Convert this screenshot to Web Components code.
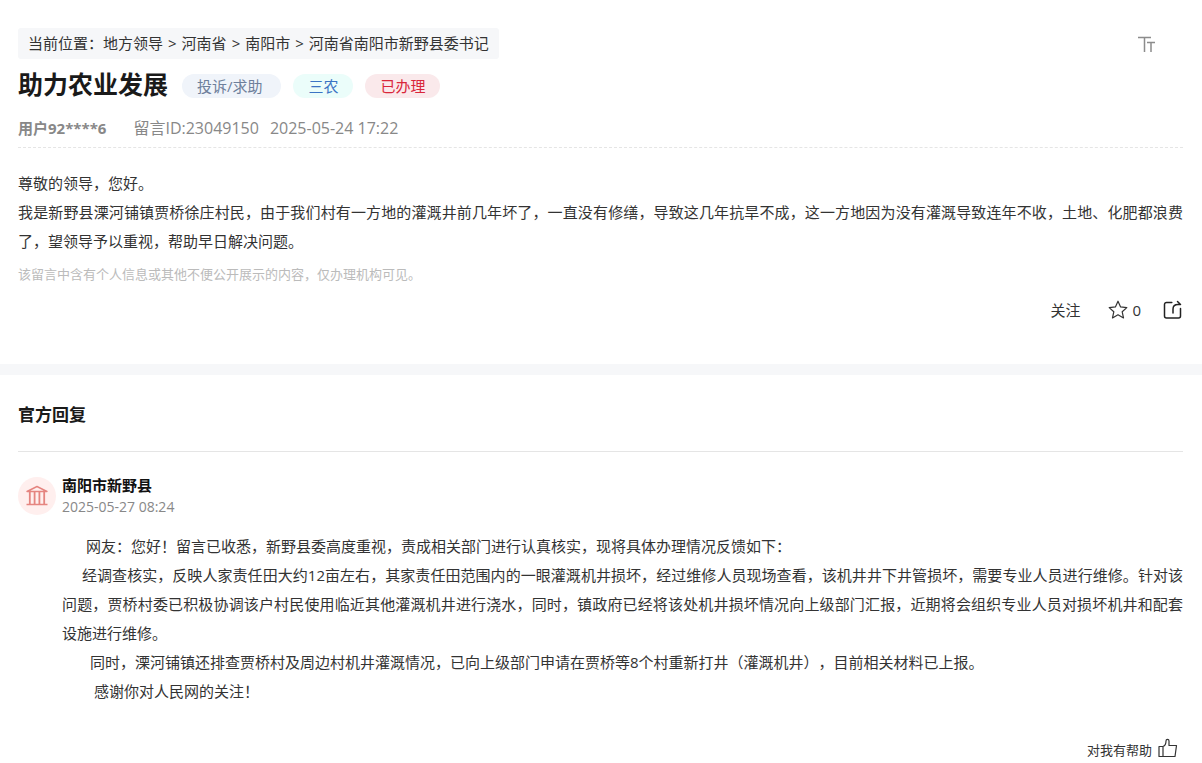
<!DOCTYPE html>
<html lang="zh-CN">
<head>
<meta charset="utf-8">
<meta name="viewport" content="width=device-width, initial-scale=1">
<title>助力农业发展</title>
<style>
body {
  margin: 0;
  background: #fff;
  color: #333;
  font: 15px/24px "Open Sans", "Noto Sans CJK SC", sans-serif;
  text-spacing-trim: space-all;
}
</style>
</head>
<body>
<message-page></message-page>

<script>
function define(name, html) {
  const template = document.createElement('template');
  template.innerHTML = html;
  customElements.define(name, class extends HTMLElement {
    constructor() {
      super();
      this.attachShadow({ mode: 'open' }).append(template.content.cloneNode(true));
    }
  });
}

define('crumb-trail', `
<style>
:host { display: block; padding: 0 10px; border-radius: 3px; background: #f6f7f9; line-height: 31px; }
a { color: inherit; text-decoration: none; }
i { font-style: normal; margin: 0 5px; }
</style>
<nav aria-label="当前位置">当前位置：<a href="#leaders">地方领导</a><i>&gt;</i><a href="#henan">河南省</a><i>&gt;</i><a href="#nanyang">南阳市</a><i>&gt;</i><a href="#xinye">河南省南阳市新野县委书记</a></nav>
`);

define('font-size-button', `
<style>
:host { display: block; }
button { display: block; border: 0; padding: 0; background: none; color: #8c8c8c; cursor: pointer; }
svg { display: block; }
</style>
<button type="button" aria-label="字号"><svg width="20" height="18" viewBox="0 0 20 18" fill="none" stroke="currentColor" stroke-width="1.5"><path d="M1 2.500h13M7.500 2.500V17M10 7.500h8M14 7.500V17"/></svg></button>
`);

define('pill-tag', `
<style>
:host { display: block; padding: 0 15px; border-radius: 12px; background: #f0f4fa; color: #6e7f9b; line-height: 24px; }
:host([kind="topic"]) { background: #ebfdfa; color: #3b74c4; }
:host([kind="done"]) { background: #fae9eb; color: #d9263a; }
slot { white-space: pre; }
::slotted(*) { white-space: pre; }
</style>
<slot></slot>
`);

define('message-actions', `
<style>
:host { display: flex; justify-content: flex-end; align-items: center; }
button { display: flex; align-items: center; gap: 4px; height: 24px; border: 0; padding: 0; background: none; font: inherit; color: inherit; cursor: pointer; }
.star { margin: 0 22px 0 28px; }
svg { display: block; }
</style>
<button type="button">关注</button>
<button type="button" class="star"><svg width="20" height="20" viewBox="0 0 20 20" fill="none" stroke="currentColor" stroke-width="1.2" stroke-linejoin="round"><path d="M10 1.200l2.600 5.700 6.200.7-4.600 4.200 1.300 6.100L10 14.800l-5.500 3.100 1.300-6.100L1.200 7.600l6.200-.7z"/></svg>0</button>
<button type="button" aria-label="分享"><svg width="20" height="20" viewBox="0 0 20 20" fill="none" stroke="#222" stroke-width="1.5" stroke-linejoin="round" stroke-linecap="round"><path d="M8.800 2.500H3.500a2 2 0 0 0-2 2V16a2 2 0 0 0 2 2h12a2 2 0 0 0 2-2V8.500M10 13V9c0-3 2-4.500 5-4.500h2.500M14.500 1.500l3 3"/></svg></button>
`);

define('message-detail', `
<style>
:host { display: block; padding: 28px 19px 42px 18px; }
.top { display: flex; justify-content: space-between; align-items: center; padding-right: 26px; }
.title { display: flex; align-items: center; gap: 12px; height: 38px; margin-top: 8px; }
h1 { margin: 0 2px 0 0; padding-bottom: 4px; font-size: 25px; line-height: 34px; color: #1a1a1a; }
.meta { display: flex; gap: 11px; margin-top: 4px; border-bottom: 1px dashed #e5e5e5; line-height: 38px; font-size: 16px; color: #888; }
.meta strong { font-size: 15px; margin-right: 16px; }
p { margin: 0; line-height: 29px; text-align: justify; }
.meta + p { margin-top: 21px; }
.note { margin-top: 4px; font-size: 13px; color: #bbb; }
message-actions { margin-top: 9px; }
</style>
<div class="top"><crumb-trail></crumb-trail><font-size-button></font-size-button></div>
<div class="title"><h1>助力农业发展</h1><pill-tag>投诉/求助 </pill-tag><pill-tag kind="topic">三农</pill-tag><pill-tag kind="done">已办理</pill-tag></div>
<div class="meta"><strong>用户92****6</strong><span>留言ID:23049150</span><time>2025-05-24 17:22</time></div>
<p>尊敬的领导，您好。</p>
<p>我是新野县溧河铺镇贾桥徐庄村民，由于我们村有一方地的灌溉井前几年坏了，一直没有修缮，导致这几年抗旱不成，这一方地因为没有灌溉导致连年不收，土地、化肥都浪费了，望领导予以重视，帮助早日解决问题。</p>
<p class="note">该留言中含有个人信息或其他不便公开展示的内容，仅办理机构可见。</p>
<message-actions></message-actions>
`);

define('agency-head', `
<style>
:host { display: flex; align-items: center; gap: 6px; line-height: 22px; }
.avatar { display: grid; place-items: center; width: 38px; height: 38px; border-radius: 50%; background: #ffefee; }
svg { display: block; }
h3 { margin: 0; font-size: 15px; color: #111; }
time { display: block; font-size: 14px; color: #888; }
</style>
<div class="avatar"><svg width="22" height="22" viewBox="0 0 22 22" fill="none" stroke="#e58580" stroke-linejoin="round"><path stroke-width="1.4" d="M1 6.500L11 1.500l10 5zM0.500 19.500h21"/><path stroke-width="1.800" d="M3.800 7v12M8.600 7v12M13.400 7v12M18.200 7v12"/></svg></div>
<div><h3><slot name="name"></slot></h3><time><slot name="date"></slot></time></div>
`);

define('helpful-button', `
<style>
:host { display: flex; justify-content: flex-end; padding-right: 5px; }
button { display: flex; align-items: center; gap: 6px; height: 24px; border: 0; padding: 0; background: none; font: inherit; font-size: 13px; color: inherit; cursor: pointer; }
svg { display: block; margin-bottom: 4px; }
</style>
<button type="button">对我有帮助<svg width="20" height="20" viewBox="0 0 20 20" fill="none" stroke="currentColor" stroke-width="1.2" stroke-linejoin="round"><path d="M1 8.500h4V18.500H1zM5 8.500c2.200-.8 3-2.500 3-5.500C8 .8 11 .8 11 3v4.500h7.500L17 18.500H5"/></svg></button>
`);

define('official-reply', `
<style>
:host { display: block; padding: 28px 19px 0 18px; }
h2 { margin: 0; padding-bottom: 24px; border-bottom: 1px solid #e5e5e5; font-size: 17px; line-height: 24px; color: #1a1a1a; }
agency-head { margin-top: 22px; }
.body { margin: 14px 0 32px 44px; line-height: 29px; text-align: justify; }
p { margin: 0; text-indent: 24px; }
p:nth-child(2) { text-indent: 20px; }
p:nth-child(3) { text-indent: 28px; }
p:nth-child(4) { text-indent: 32px; }
</style>
<h2>官方回复</h2>
<agency-head><span slot="name">南阳市新野县</span><span slot="date">2025-05-27 08:24</span></agency-head>
<div class="body">
<p>网友：您好！留言已收悉，新野县委高度重视，责成相关部门进行认真核实，现将具体办理情况反馈如下：</p>
<p>经调查核实，反映人家责任田大约12亩左右，其家责任田范围内的一眼灌溉机井损坏，经过维修人员现场查看，该机井井下井管损坏，需要专业人员进行维修。针对该问题，贾桥村委已积极协调该户村民使用临近其他灌溉机井进行浇水，同时，镇政府已经将该处机井损坏情况向上级部门汇报，近期将会组织专业人员对损坏机井和配套设施进行维修。</p>
<p>同时，溧河铺镇还排查贾桥村及周边村机井灌溉情况，已向上级部门申请在贾桥等8个村重新打井（灌溉机井），目前相关材料已上报。</p>
<p>感谢你对人民网的关注！</p>
</div>
<helpful-button></helpful-button>
`);

define('message-page', `
<style>
:host { display: block; }
main { display: block; }
official-reply { border-top: 11px solid #f6f7f9; }
</style>
<main><message-detail></message-detail><official-reply></official-reply></main>
`);
</script>
</body>
</html>
